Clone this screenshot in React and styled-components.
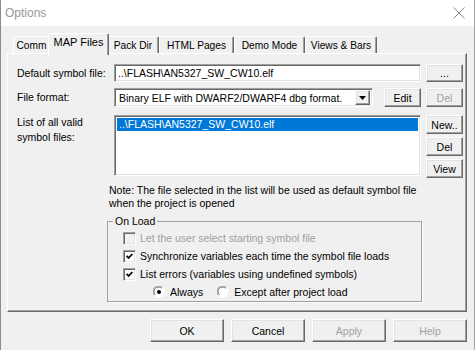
import React from 'react';
import styled, { createGlobalStyle } from 'styled-components';

const GlobalStyle = createGlobalStyle`
  html, body {
    margin: 0;
    padding: 0;
    background: #f0f0f0;
  }
`;

const Window = styled.div`
  width: 475px;
  height: 350px;
  box-sizing: border-box;
  border-left: 1px solid #8c8c8c;
  border-right: 1px solid #a8a8a8;
  background: #f0f0f0;
  font-family: 'Liberation Sans', Arial, sans-serif;
  font-size: 10.5px;
  color: #000;
  display: flex;
  flex-direction: column;
  overflow: hidden;
`;

const TitleBar = styled.div`
  height: 26px;
  flex: none;
  background: #fff;
  display: flex;
  align-items: center;
  justify-content: space-between;
  padding: 0 9px 0 4px;
`;

const TitleText = styled.span`
  font-size: 12px;
  color: #999;
`;

const Body = styled.div`
  padding: 7px 0 0 6px;
  display: flex;
  flex-direction: column;
`;

const TabStrip = styled.div`
  height: 20px;
  display: flex;
  align-items: flex-end;
  padding-left: 6px;
`;

const Tab = styled.div`
  box-sizing: border-box;
  flex: none;
  width: ${p => p.$w}px;
  height: ${p => (p.$active ? 22 : 17)}px;
  margin: 0 ${p => (p.$active ? -2 : 0)}px ${p => (p.$active ? -2 : 0)}px;
  z-index: ${p => (p.$active ? 2 : 1)};
  position: relative;
  background: #f0f0f0;
  border-top: 1px solid #fff;
  border-left: 1px solid #fff;
  border-right: 1px solid #696969;
  box-shadow: inset -1px 0 #a0a0a0;
  border-radius: 2px 2px 0 0;
  display: flex;
  justify-content: center;
  padding-top: 2px;
  font-size: ${p => (p.$active ? 11 : 10.2)}px;
  line-height: 13px;
  white-space: nowrap;
`;

const Panel = styled.div`
  box-sizing: border-box;
  width: 460px;
  height: 259px;
  border: 1px solid;
  border-color: #fff #696969 #696969 #fff;
  box-shadow: inset -1px -1px #a0a0a0;
  padding: 10px 8px 0 9px;
  position: relative;
  z-index: 1;
`;

const FieldRow = styled.div`
  display: grid;
  grid-template-columns: 92px 307px 37px;
  column-gap: 5px;
  margin-top: ${p => p.$gap || 0}px;
  height: ${p => p.$h}px;
  align-items: ${p => (p.$top ? 'start' : 'center')};
`;

const Label = styled.div`
  line-height: 15px;
  white-space: nowrap;
`;

const Sunken = styled.div`
  box-sizing: border-box;
  border: 1px solid;
  border-color: #a0a0a0 #fff #fff #a0a0a0;
  box-shadow: inset 1px 1px #696969, inset -1px -1px #e3e3e3;
  background: #fff;
`;

const TextInput = styled(Sunken)`
  height: 18px;
  padding: 1px 0 0 3px;
  line-height: 14px;
  white-space: nowrap;
`;

const SelectBox = styled(Sunken)`
  width: 259px;
  height: 19px;
  display: flex;
  align-items: center;
  justify-content: space-between;
  padding: 2px 2px 2px 4px;
  white-space: nowrap;
`;

const Button = styled.div`
  box-sizing: border-box;
  width: ${p => p.$w || 37}px;
  height: ${p => p.$h || 19}px;
  border: 1px solid;
  border-color: #fff #696969 #696969 #fff;
  box-shadow: inset -1px -1px #a0a0a0, inset 1px 1px #e3e3e3;
  background: #f0f0f0;
  color: ${p => (p.$disabled ? '#a0a0a0' : '#000')};
  display: flex;
  align-items: center;
  justify-content: center;
  font-size: 10.5px;
  white-space: nowrap;
`;

const ArrowButton = styled(Button)`
  width: 15px;
  height: 15px;
`;

const FieldPair = styled.div`
  display: flex;
  justify-content: space-between;
  align-items: center;
`;

const ListBox = styled(Sunken)`
  height: 61px;
  padding: 2px;
`;

const ListItem = styled.div`
  height: 13px;
  line-height: 13px;
  padding-left: 2px;
  background: ${p => (p.$selected ? '#0078d7' : 'transparent')};
  color: ${p => (p.$selected ? '#fff' : '#000')};
  white-space: nowrap;
`;

const ButtonColumn = styled.div`
  display: flex;
  flex-direction: column;
  gap: 3px;
`;

const Note = styled.div`
  margin: 6px 0 0 92px;
  line-height: 13px;
  white-space: nowrap;
`;

const GroupBox = styled.fieldset`
  box-sizing: border-box;
  width: 315px;
  margin: 5px 0 0 90px;
  padding: 1px 0 1px 0;
  border: 1px solid #a0a0a0;
  box-shadow: 1px 1px 0 #fff;
  min-inline-size: 0;
`;

const Legend = styled.legend`
  margin-left: 5px;
  padding: 0 2px;
  line-height: 13px;
`;

const CheckRow = styled.div`
  height: ${p => p.$h || 18}px;
  display: flex;
  align-items: center;
  gap: 4px;
  padding-left: ${p => 15 + (p.$indent || 0)}px;
  color: ${p => (p.$disabled ? '#a0a0a0' : '#000')};
  white-space: nowrap;
`;

const Box = styled(Sunken)`
  width: 13px;
  height: 13px;
  flex: none;
  display: flex;
  align-items: center;
  justify-content: center;
  background: ${p => (p.$disabled ? '#f0f0f0' : '#fff')};
`;

const RadioItem = styled.span`
  display: inline-flex;
  align-items: center;
  gap: 5px;
  margin-right: ${p => p.$mr || 0}px;
`;

const Footer = styled.div`
  display: flex;
  justify-content: flex-end;
  gap: 7px;
  padding: 7px 7px 0 0;
`;

const Check = () => (
  <svg width="7" height="7" viewBox="0 0 7 7">
    <path d="M0.6 2.8 L2.6 4.9 L6.4 1" fill="none" stroke="#000" strokeWidth="1.7" />
  </svg>
);

const Radio = ({ checked }) => (
  <svg width="12" height="12" viewBox="0 0 12 12">
    <circle cx="6" cy="6" r="5.5" fill="#fff" />
    <path d="M1.5 9.5 A5.5 5.5 0 0 1 9.5 1.5" fill="none" stroke="#a0a0a0" strokeWidth="1" />
    <path d="M2.3 8.7 A4.3 4.3 0 0 1 8.7 2.3" fill="none" stroke="#696969" strokeWidth="1" />
    <path d="M9.5 1.5 A5.5 5.5 0 0 1 1.5 9.5" fill="none" stroke="#fff" strokeWidth="1" />
    {checked && <circle cx="6" cy="6" r="2" fill="#000" />}
  </svg>
);

const CloseIcon = () => (
  <svg width="12" height="12" viewBox="0 0 12 12">
    <path d="M0.5 0.5 L11.5 11.5 M11.5 0.5 L0.5 11.5" stroke="#8a8a8a" strokeWidth="1" />
  </svg>
);

const DownArrow = () => (
  <svg width="7" height="4" viewBox="0 0 7 4">
    <path d="M0 0 H7 L3.5 4 Z" fill="#000" />
  </svg>
);

const tabs = [
  { label: 'Comm', w: 37 },
  { label: 'MAP Files', w: 61, active: true },
  { label: 'Pack Dir', w: 52 },
  { label: 'HTML Pages', w: 75 },
  { label: 'Demo Mode', w: 71 },
  { label: 'Views & Bars', w: 72 },
];

const App = () => (
  <Window>
    <GlobalStyle />
    <TitleBar>
      <TitleText>Options</TitleText>
      <CloseIcon />
    </TitleBar>
    <Body>
      <TabStrip>
        {tabs.map(t => (
          <Tab key={t.label} $w={t.w} $active={t.active}>{t.label}</Tab>
        ))}
      </TabStrip>
      <Panel>
        <FieldRow $h={18}>
          <Label>Default symbol file:</Label>
          <TextInput>..\FLASH\AN5327_SW_CW10.elf</TextInput>
          <Button $h={18}>...</Button>
        </FieldRow>
        <FieldRow $h={19} $gap={6}>
          <Label>File format:</Label>
          <FieldPair>
            <SelectBox>
              <span>Binary ELF with DWARF2/DWARF4 dbg format.</span>
              <ArrowButton><DownArrow /></ArrowButton>
            </SelectBox>
            <Button>Edit</Button>
          </FieldPair>
          <Button $disabled>Del</Button>
        </FieldRow>
        <FieldRow $h={63} $gap={8} $top>
          <Label>List of all valid<br />symbol files:</Label>
          <ListBox>
            <ListItem $selected>..\FLASH\AN5327_SW_CW10.elf</ListItem>
          </ListBox>
          <ButtonColumn>
            <Button>New..</Button>
            <Button>Del</Button>
            <Button>View</Button>
          </ButtonColumn>
        </FieldRow>
        <Note>
          Note: The file selected in the list will be used as default symbol file<br />
          when the project is opened
        </Note>
        <GroupBox>
          <Legend>On Load</Legend>
          <CheckRow $disabled>
            <Box $disabled />
            Let the user select starting symbol file
          </CheckRow>
          <CheckRow>
            <Box><Check /></Box>
            Synchronize variables each time the symbol file loads
          </CheckRow>
          <CheckRow>
            <Box><Check /></Box>
            List errors (variables using undefined symbols)
          </CheckRow>
          <CheckRow $h={17} $indent={30}>
            <RadioItem $mr={10}><Radio checked />Always</RadioItem>
            <RadioItem><Radio />Except after project load</RadioItem>
          </CheckRow>
        </GroupBox>
      </Panel>
      <Footer>
        <Button $w={74} $h={23}>OK</Button>
        <Button $w={74} $h={23}>Cancel</Button>
        <Button $w={74} $h={23} $disabled>Apply</Button>
        <Button $w={74} $h={23} $disabled>Help</Button>
      </Footer>
    </Body>
  </Window>
);

export default App;
